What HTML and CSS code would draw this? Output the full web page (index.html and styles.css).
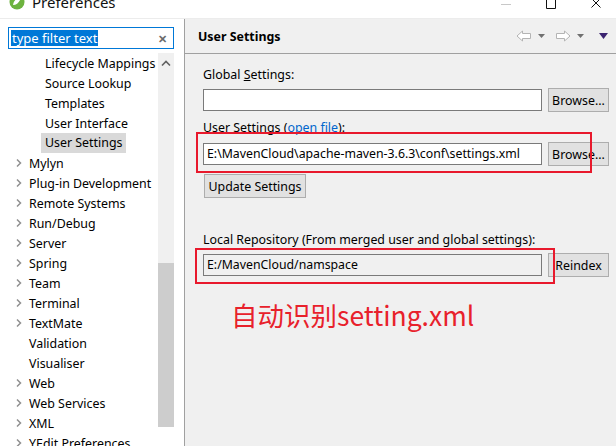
FILE: index.html
```html
<!DOCTYPE html>
<html lang="en">
  <head>
    <meta charset="UTF-8" />
    <title>Preferences</title>
    <link rel="stylesheet" href="styles.css">
  </head>
  <body class="body">
    <div class="titlebar">
      <div class="titleLeft">
        <svg class="appIcon" width="16" height="16" viewBox="0 0 16 16">
          <circle cx="8" cy="8" r="7.5" fill="#6db33f" />
          <path d="M4 11 C5 5 9 4 12 3 C11 8 8 11 4 11 Z" fill="#fff" />
        </svg>
        <span class="titleText">Preferences</span>
      </div>
      <div class="winControls">
        <svg width="12" height="10" viewBox="0 0 12 10"><path d="M1 4.5 H11" stroke="#c8c8c8" /></svg>
        <svg width="12" height="10" viewBox="0 0 12 10"><path d="M1.5 -2 V8.5 H10.5 V-2" stroke="#111" fill="none" /></svg>
        <svg width="12" height="10" viewBox="0 0 12 10"><path d="M1.5 -1.5 L10.5 7.5 M10.5 -1.5 L1.5 7.5" stroke="#111" fill="none" /></svg>
      </div>
    </div>

    <div class="main">
      <div class="sidebar">
        <div class="filter">
          <span class="filterText">type filter text</span>
          <span class="filterClear">✕</span>
        </div>
        <div class="treeWrap">
          <div class="tree">
            <div class="row sub">Lifecycle Mappings</div>
            <div class="row sub">Source Lookup</div>
            <div class="row sub">Templates</div>
            <div class="row sub">User Interface</div>
            <div class="row sub"><span class="selected">User Settings</span></div>
            <div class="row"><span class="chev"></span>Mylyn</div>
            <div class="row"><span class="chev"></span>Plug-in Development</div>
            <div class="row"><span class="chev"></span>Remote Systems</div>
            <div class="row"><span class="chev"></span>Run/Debug</div>
            <div class="row"><span class="chev"></span>Server</div>
            <div class="row"><span class="chev"></span>Spring</div>
            <div class="row"><span class="chev"></span>Team</div>
            <div class="row"><span class="chev"></span>Terminal</div>
            <div class="row"><span class="chev"></span>TextMate</div>
            <div class="row"><span class="nochev"></span>Validation</div>
            <div class="row"><span class="nochev"></span>Visualiser</div>
            <div class="row"><span class="chev"></span>Web</div>
            <div class="row"><span class="chev"></span>Web Services</div>
            <div class="row"><span class="chev"></span>XML</div>
            <div class="row"><span class="chev"></span>YEdit Preferences</div>
          </div>
          <div class="scrollbar">
            <svg class="scrollUp" width="10" height="7" viewBox="0 0 10 7"><path d="M1 5.5 L5 1.5 L9 5.5" stroke="#606060" stroke-width="1.6" fill="none" /></svg>
            <div class="thumb"></div>
          </div>
        </div>
      </div>

      <div class="content">
        <div class="header">
          <span class="headerTitle">User Settings</span>
          <div class="nav">
            <svg width="16" height="12" viewBox="0 0 16 12"><path d="M1 6 L6.5 1 V3.5 H14.5 V8.5 H6.5 V11 Z" stroke="#b4b4b4" fill="#fff" /></svg>
            <svg class="navDrop" width="7" height="4" viewBox="0 0 7 4"><path d="M0 0 H7 L3.5 4 Z" fill="#707070" /></svg>
            <svg width="16" height="12" viewBox="0 0 16 12"><path d="M15 6 L9.5 1 V3.5 H1.5 V8.5 H9.5 V11 Z" stroke="#b4b4b4" fill="#fff" /></svg>
            <svg class="navDrop" width="7" height="4" viewBox="0 0 7 4"><path d="M0 0 H7 L3.5 4 Z" fill="#707070" /></svg>
            <svg class="navMenu" width="9" height="6" viewBox="0 0 9 6"><path d="M0 0 H9 L4.5 6 Z" fill="#3b2470" /></svg>
          </div>
        </div>

        <div class="form">
          <div class="label">Global <u>S</u>ettings:</div>
          <div class="fieldRow">
            <div class="input"></div>
            <button class="btn">Browse...</button>
          </div>

          <div class="label gapTop">User Settings (<span class="link">open file</span>):</div>
          <div class="fieldRow gapTop">
            <div class="input">E:\MavenCloud\apache-maven-3.6.3\conf\settings.xml</div>
            <button class="btn">Browse...</button>
            <div class="redBox boxOne"></div>
          </div>
          <button class="btn btnUpdate">Update Settings</button>

          <div class="label gapRepo">Local Repository (From merged user and global settings):</div>
          <div class="fieldRow gapSmall">
            <div class="input readonly">E:/MavenCloud/namspace</div>
            <button class="btn">Reindex</button>
            <div class="redBox boxTwo"></div>
          </div>

          <div class="note">自动识别setting.xml</div>
        </div>
      </div>
    </div>
  </body>
</html>
```

FILE: styles.css
```css
.body {
  margin: 0;
  width: 616px;
  height: 446px;
  overflow: hidden;
  background-color: #ffffff;
  font-family: "Noto Sans", "Noto Sans CJK SC", sans-serif;
  font-size: 12.3px;
  color: #000;
}

.titlebar {
  height: 18px;
  display: flex;
  justify-content: space-between;
  border-bottom: 1px solid #ececec;
  overflow: hidden;
}
.titleLeft {
  display: flex;
  align-items: center;
  gap: 7px;
  padding-left: 9px;
  margin-top: -14px;
}
.titleText {
  font-size: 15px;
  color: #111;
}
.winControls {
  display: flex;
  align-items: flex-start;
  gap: 33px;
  padding-right: 14px;
}

.main {
  display: flex;
  height: 427px;
}

.sidebar {
  width: 184px;
  border-right: 1px solid #a0a0a0;
  background-color: #fff;
}
.filter {
  margin: 8px 0 0 8px;
  width: 166px;
  height: 22px;
  box-sizing: border-box;
  border: 1px solid #0078d7;
  display: flex;
  align-items: center;
  justify-content: space-between;
  padding: 0 6px 0 2px;
}
.filterText {
  background-color: #0078d7;
  color: #fff;
  font-size: 13px;
  line-height: 16px;
  padding: 0 1px;
}
.filterClear {
  color: #6b6b6b;
  font-size: 11px;
  font-weight: bold;
}

.treeWrap {
  display: flex;
  margin-top: 4px;
}
.tree {
  width: 158px;
}
.row {
  height: 20px;
  display: flex;
  align-items: center;
  white-space: nowrap;
  font-size: 12.4px;
  padding-left: 15px;
}
.row.sub {
  padding-left: 45px;
}
.selected {
  background-color: #d9d9d9;
  margin-left: -4px;
  padding: 0 4px;
  line-height: 20px;
}
.chev,
.nochev {
  width: 14px;
  height: 20px;
}
.chev {
  background: url("data:image/svg+xml;utf8,<svg xmlns='http://www.w3.org/2000/svg' width='14' height='20'><path d='M2 6.5 L5.5 10 L2 13.5' stroke='%23909090' stroke-width='1.5' fill='none'/></svg>") no-repeat;
}

.scrollbar {
  width: 16px;
  height: 374px;
  background-color: #f0f0f0;
  display: flex;
  flex-direction: column;
  align-items: center;
}
.scrollUp {
  margin-top: 7px;
}
.thumb {
  margin-top: 196px;
  width: 16px;
  flex: 1;
  background-color: #cdcdcd;
}

.content {
  flex: 1;
  background-color: #f0f0f0;
}
.header {
  height: 34px;
  border-bottom: 1px solid #a0a0a0;
  display: flex;
  align-items: center;
  justify-content: space-between;
  padding: 0 8px 0 13px;
}
.headerTitle {
  font-weight: bold;
  font-size: 12.4px;
}
.nav {
  display: flex;
  align-items: center;
  gap: 6px;
}
.navDrop {
  margin-right: 4px;
}
.navMenu {
  margin-left: 5px;
}

.form {
  padding: 13px 7px 0 18px;
}
.label {
  line-height: 16px;
  font-size: 12.4px;
}
.link {
  color: #0066cc;
}
.fieldRow {
  position: relative;
  display: flex;
  align-items: center;
  gap: 6px;
  margin-top: 5px;
}
.input {
  box-sizing: border-box;
  width: 339px;
  height: 22px;
  border: 1px solid #7a7a7a;
  background-color: #fff;
  font-size: 12.3px;
  line-height: 20px;
  padding-left: 3px;
  white-space: nowrap;
}
.input.readonly {
  background-color: #f0f0f0;
}
.btn {
  box-sizing: border-box;
  height: 24px;
  width: 61px;
  border: 1px solid #adadad;
  background-color: #e1e1e1;
  font-family: "Noto Sans", sans-serif;
  font-size: 12.4px;
  padding: 0;
  color: #000;
}
.btnUpdate {
  width: 102px;
  margin-top: 8px;
  margin-left: 1px;
}
.label.gapTop {
  margin-top: 8px;
}
.fieldRow.gapTop {
  margin-top: 6px;
}
.gapRepo {
  margin-top: 34px;
}
.gapSmall {
  margin-top: 5px;
}

.redBox {
  position: absolute;
  border: 2px solid #e8192c;
  box-sizing: border-box;
}
.boxOne {
  left: -7px;
  top: -10px;
  width: 396px;
  height: 41px;
}
.boxTwo {
  left: -8px;
  top: -5px;
  width: 360px;
  height: 36px;
}

.note {
  margin: 20px 0 0 28px;
  color: #e8212b;
  font-family: "Noto Sans CJK SC", sans-serif;
  font-size: 26.5px;
  line-height: 36px;
}
```
